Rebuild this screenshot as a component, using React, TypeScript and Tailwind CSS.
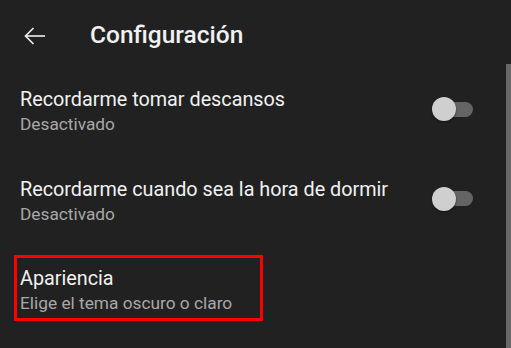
import { ReactNode } from 'react';

function Toggle() {
  return (
    <div className="relative w-[42px] h-[24px] mb-[5.5px] flex items-center shrink-0">
      <div className="ml-[1px] w-[40px] h-[15px] rounded-full bg-[#646464]" />
      <div className="absolute left-0 top-0 w-[24px] h-[24px] rounded-full bg-[#cfcfcf] shadow-[0_1px_2px_rgba(0,0,0,0.5)]" />
    </div>
  );
}

function Texts({ title, sub }: { title: string; sub: string }) {
  return (
    <div className="flex flex-col min-w-0">
      <div className="text-[19.8px] leading-[25px] text-[#f1f1f1] whitespace-nowrap">{title}</div>
      <div className="text-[17.3px] leading-[24px] text-[#a8a8a8] whitespace-nowrap">{sub}</div>
    </div>
  );
}

function Row({ children }: { children: ReactNode }) {
  return <div className="h-[89.5px] flex items-center justify-between pl-5 pr-[32px] shrink-0">{children}</div>;
}

export default function App() {
  return (
    <div
      className="w-[511px] h-[348px] bg-[#212121] flex overflow-hidden"
      style={{ fontFamily: 'Roboto, "Noto Sans", sans-serif' }}
    >
      <div className="flex-1 flex flex-col min-w-0">
        <header className="h-[67px] pt-1 flex items-center shrink-0">
          <svg className="ml-[23px] w-[24px] h-[24px]" viewBox="0 0 24 24" fill="none" stroke="#f1f1f1" strokeWidth="1.6">
            <path d="M22 12H2.5" />
            <path d="M10.5 4L2.5 12l8 8" />
          </svg>
          <h1 className="ml-[43px] text-[24.5px] font-medium text-[#f1f1f1]">Configuración</h1>
        </header>
        <Row>
          <Texts title="Recordarme tomar descansos" sub="Desactivado" />
          <Toggle />
        </Row>
        <Row>
          <Texts title="Recordarme cuando sea la hora de dormir" sub="Desactivado" />
          <Toggle />
        </Row>
        <div className="h-[89.5px] flex items-center pl-[14px] shrink-0">
          <div className="w-[249px] h-[66px] mb-[5.5px] border-[3px] border-[#ff0000] pl-[3px] pt-[8px] flex items-start">
            <Texts title="Apariencia" sub="Elige el tema oscuro o claro" />
          </div>
        </div>
      </div>
      <div className="w-[5px] flex flex-col shrink-0">
        <div className="h-[64px]" />
        <div className="flex-1 bg-[#686868]" />
      </div>
    </div>
  );
}
